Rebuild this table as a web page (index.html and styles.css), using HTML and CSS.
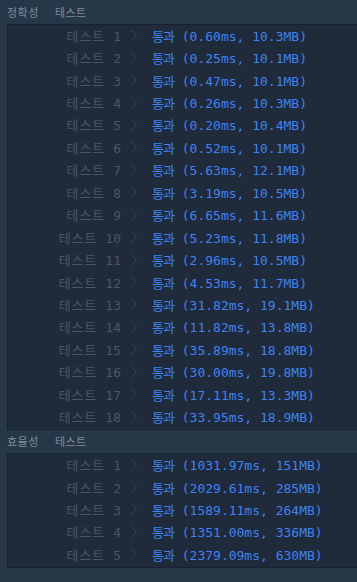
FILE: index.html
```html
<!DOCTYPE html>
<html lang="ko">
<head>
<meta charset="utf-8">
<link rel="stylesheet" href="styles.css">
</head>
<body>
<div class="page">
  <div class="section-title"><span>정확성</span><span>테스트</span></div>
  <div class="box">
    <div class="row"><span class="label"><span class="kr">테스트</span> 1</span><svg class="chev" viewBox="0 0 6 12"><path d="M0.5 0.5 L5.5 6 L0.5 11.5"/></svg><span class="result"><span class="krb">통과</span> (0.60ms, 10.3MB)</span></div>
    <div class="row"><span class="label"><span class="kr">테스트</span> 2</span><svg class="chev" viewBox="0 0 6 12"><path d="M0.5 0.5 L5.5 6 L0.5 11.5"/></svg><span class="result"><span class="krb">통과</span> (0.25ms, 10.1MB)</span></div>
    <div class="row"><span class="label"><span class="kr">테스트</span> 3</span><svg class="chev" viewBox="0 0 6 12"><path d="M0.5 0.5 L5.5 6 L0.5 11.5"/></svg><span class="result"><span class="krb">통과</span> (0.47ms, 10.1MB)</span></div>
    <div class="row"><span class="label"><span class="kr">테스트</span> 4</span><svg class="chev" viewBox="0 0 6 12"><path d="M0.5 0.5 L5.5 6 L0.5 11.5"/></svg><span class="result"><span class="krb">통과</span> (0.26ms, 10.3MB)</span></div>
    <div class="row"><span class="label"><span class="kr">테스트</span> 5</span><svg class="chev" viewBox="0 0 6 12"><path d="M0.5 0.5 L5.5 6 L0.5 11.5"/></svg><span class="result"><span class="krb">통과</span> (0.20ms, 10.4MB)</span></div>
    <div class="row"><span class="label"><span class="kr">테스트</span> 6</span><svg class="chev" viewBox="0 0 6 12"><path d="M0.5 0.5 L5.5 6 L0.5 11.5"/></svg><span class="result"><span class="krb">통과</span> (0.52ms, 10.1MB)</span></div>
    <div class="row"><span class="label"><span class="kr">테스트</span> 7</span><svg class="chev" viewBox="0 0 6 12"><path d="M0.5 0.5 L5.5 6 L0.5 11.5"/></svg><span class="result"><span class="krb">통과</span> (5.63ms, 12.1MB)</span></div>
    <div class="row"><span class="label"><span class="kr">테스트</span> 8</span><svg class="chev" viewBox="0 0 6 12"><path d="M0.5 0.5 L5.5 6 L0.5 11.5"/></svg><span class="result"><span class="krb">통과</span> (3.19ms, 10.5MB)</span></div>
    <div class="row"><span class="label"><span class="kr">테스트</span> 9</span><svg class="chev" viewBox="0 0 6 12"><path d="M0.5 0.5 L5.5 6 L0.5 11.5"/></svg><span class="result"><span class="krb">통과</span> (6.65ms, 11.6MB)</span></div>
    <div class="row"><span class="label"><span class="kr">테스트</span> 10</span><svg class="chev" viewBox="0 0 6 12"><path d="M0.5 0.5 L5.5 6 L0.5 11.5"/></svg><span class="result"><span class="krb">통과</span> (5.23ms, 11.8MB)</span></div>
    <div class="row"><span class="label"><span class="kr">테스트</span> 11</span><svg class="chev" viewBox="0 0 6 12"><path d="M0.5 0.5 L5.5 6 L0.5 11.5"/></svg><span class="result"><span class="krb">통과</span> (2.96ms, 10.5MB)</span></div>
    <div class="row"><span class="label"><span class="kr">테스트</span> 12</span><svg class="chev" viewBox="0 0 6 12"><path d="M0.5 0.5 L5.5 6 L0.5 11.5"/></svg><span class="result"><span class="krb">통과</span> (4.53ms, 11.7MB)</span></div>
    <div class="row"><span class="label"><span class="kr">테스트</span> 13</span><svg class="chev" viewBox="0 0 6 12"><path d="M0.5 0.5 L5.5 6 L0.5 11.5"/></svg><span class="result"><span class="krb">통과</span> (31.82ms, 19.1MB)</span></div>
    <div class="row"><span class="label"><span class="kr">테스트</span> 14</span><svg class="chev" viewBox="0 0 6 12"><path d="M0.5 0.5 L5.5 6 L0.5 11.5"/></svg><span class="result"><span class="krb">통과</span> (11.82ms, 13.8MB)</span></div>
    <div class="row"><span class="label"><span class="kr">테스트</span> 15</span><svg class="chev" viewBox="0 0 6 12"><path d="M0.5 0.5 L5.5 6 L0.5 11.5"/></svg><span class="result"><span class="krb">통과</span> (35.89ms, 18.8MB)</span></div>
    <div class="row"><span class="label"><span class="kr">테스트</span> 16</span><svg class="chev" viewBox="0 0 6 12"><path d="M0.5 0.5 L5.5 6 L0.5 11.5"/></svg><span class="result"><span class="krb">통과</span> (30.00ms, 19.8MB)</span></div>
    <div class="row"><span class="label"><span class="kr">테스트</span> 17</span><svg class="chev" viewBox="0 0 6 12"><path d="M0.5 0.5 L5.5 6 L0.5 11.5"/></svg><span class="result"><span class="krb">통과</span> (17.11ms, 13.3MB)</span></div>
    <div class="row"><span class="label"><span class="kr">테스트</span> 18</span><svg class="chev" viewBox="0 0 6 12"><path d="M0.5 0.5 L5.5 6 L0.5 11.5"/></svg><span class="result"><span class="krb">통과</span> (33.95ms, 18.9MB)</span></div>
  </div>
  <div class="section-title second"><span>효율성</span><span>테스트</span></div>
  <div class="box">
    <div class="row"><span class="label"><span class="kr">테스트</span> 1</span><svg class="chev" viewBox="0 0 6 12"><path d="M0.5 0.5 L5.5 6 L0.5 11.5"/></svg><span class="result"><span class="krb">통과</span> (1031.97ms, 151MB)</span></div>
    <div class="row"><span class="label"><span class="kr">테스트</span> 2</span><svg class="chev" viewBox="0 0 6 12"><path d="M0.5 0.5 L5.5 6 L0.5 11.5"/></svg><span class="result"><span class="krb">통과</span> (2029.61ms, 285MB)</span></div>
    <div class="row"><span class="label"><span class="kr">테스트</span> 3</span><svg class="chev" viewBox="0 0 6 12"><path d="M0.5 0.5 L5.5 6 L0.5 11.5"/></svg><span class="result"><span class="krb">통과</span> (1589.11ms, 264MB)</span></div>
    <div class="row"><span class="label"><span class="kr">테스트</span> 4</span><svg class="chev" viewBox="0 0 6 12"><path d="M0.5 0.5 L5.5 6 L0.5 11.5"/></svg><span class="result"><span class="krb">통과</span> (1351.00ms, 336MB)</span></div>
    <div class="row"><span class="label"><span class="kr">테스트</span> 5</span><svg class="chev" viewBox="0 0 6 12"><path d="M0.5 0.5 L5.5 6 L0.5 11.5"/></svg><span class="result"><span class="krb">통과</span> (2379.09ms, 630MB)</span></div>
  </div>
</div>
</body>
</html>
```

FILE: styles.css
```css
html, body {
  margin: 0;
  padding: 0;
  background: #263747;
}
.page {
  width: 357px;
  height: 582px;
  overflow: hidden;
  background: #263747;
  font-family: "DejaVu Sans Mono", "Noto Sans CJK KR", monospace;
}
.section-title {
  display: flex;
  gap: 16px;
  height: 24px;
  line-height: 25px;
  padding-left: 7px;
  font-size: 11px;
  color: #7f8d9b;
  font-family: "Noto Sans CJK KR", sans-serif;
  letter-spacing: 0.5px;
}
.section-title.second {
  height: 23.5px;
  line-height: 23px;
}
.box {
  margin-left: 7px;
  background: #1f2a3a;
  border: 1px solid #172231;
  border-right: none;
}
.row {
  display: flex;
  align-items: center;
  box-sizing: border-box;
  height: 22.45px;
  padding-bottom: 2px;
  font-size: 13px;
  white-space: nowrap;
}
.label {
  width: 113px;
  text-align: right;
  color: #4a5567;
}
.kr {
  font-family: "Noto Sans CJK KR", sans-serif;
  letter-spacing: 1px;
}
.chev {
  width: 6px;
  height: 12px;
  margin-left: 10px;
  fill: none;
  stroke: #3a4557;
  stroke-width: 1;
}
.result {
  margin-left: 15px;
  color: #3f82f2;
}
.krb {
  font-family: "Noto Sans CJK KR", sans-serif;
  letter-spacing: -1px;
}
```
